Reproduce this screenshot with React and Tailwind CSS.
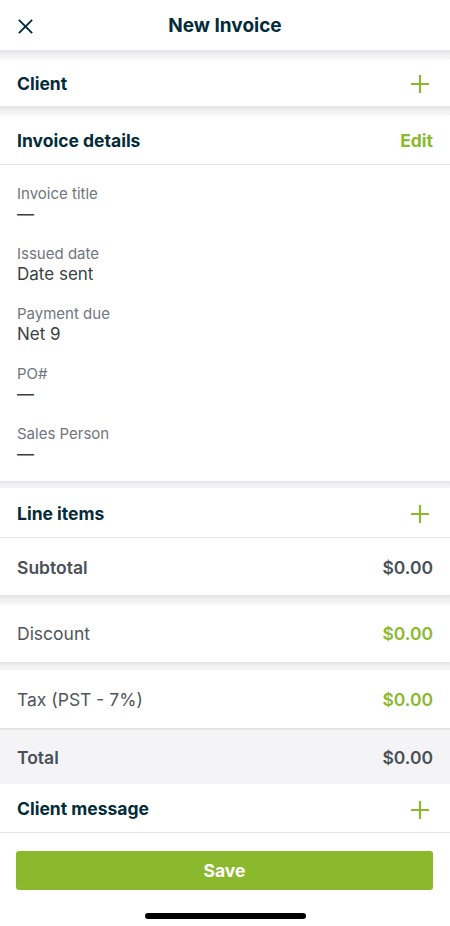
import React from "react";

const Plus = () => (
  <svg width="20" height="20" viewBox="0 0 20 20" className="text-[#8ab92d]">
    <path d="M10 1v18M1 10h18" stroke="currentColor" strokeWidth="2.2" strokeLinecap="butt" fill="none" />
  </svg>
);

const Band = ({ h = "h-[9px]" }) => (
  <div className={`${h} bg-linear-to-b from-[#e3e3e6] via-[#f1f1f3] to-[#f5f5f7]`} />
);

const Field = ({ label, value }) => (
  <div className="flex flex-col">
    <div className="text-[15px] leading-[20px] text-[#70767d]">{label}</div>
    <div className="text-[17px] leading-[20px] text-[#3a3f45]">{value}</div>
  </div>
);

export default function App() {
  return (
    <div className="w-[450px] h-[926px] bg-white flex flex-col font-['Inter',sans-serif] relative overflow-hidden">
      <div className="h-[50px] flex items-center relative pl-[17px] pt-[2px] shrink-0">
        <svg width="17" height="17" viewBox="0 0 18 18" className="text-[#032b3a]">
          <path d="M2 2l14 14M16 2L2 16" stroke="currentColor" strokeWidth="2" fill="none" />
        </svg>
        <div className="absolute inset-x-0 top-0 bottom-0 pt-[3px] flex items-center justify-center text-[19px] font-bold text-[#032b3a] pointer-events-none">New Invoice</div>
      </div>
      <Band />
      <div className="h-[47px] flex items-center justify-between pl-[17px] pr-[20px] pt-[3px]">
        <span className="text-[17.5px] font-bold text-[#032b3a]">Client</span>
        <Plus />
      </div>
      <Band />
      <div className="h-[50px] flex items-center justify-between pl-[17px] pr-[17px] pt-[3px] border-b border-[#e6e6e8]">
        <span className="text-[17.5px] font-bold text-[#032b3a]">Invoice details</span>
        <span className="text-[17.5px] font-bold text-[#8ab92d]">Edit</span>
      </div>
      <div className="flex flex-col gap-[20px] pl-[17px] pr-4 pt-[19px] pb-[17px]">
        <Field label="Invoice title" value="—" />
        <Field label="Issued date" value="Date sent" />
        <Field label="Payment due" value="Net 9" />
        <Field label="PO#" value="—" />
        <Field label="Sales Person" value="—" />
      </div>
      <Band h="h-[7px]" />
      <div className="h-[50px] flex items-center justify-between pl-[17px] pr-[20px] pt-[3px] border-b border-[#e6e6e8]">
        <span className="text-[17.5px] font-bold text-[#032b3a]">Line items</span>
        <Plus />
      </div>
      <div className="h-[57px] flex items-center justify-between pl-[17px] pr-[17px] pt-[3px]">
        <span className="text-[17.5px] font-semibold text-[#4a5058]">Subtotal</span>
        <span className="text-[17.5px] font-semibold text-[#4a5058]">$0.00</span>
      </div>
      <Band />
      <div className="h-[58px] flex items-center justify-between pl-[17px] pr-[17px] pt-[3px]">
        <span className="text-[17.5px] text-[#4f555c]">Discount</span>
        <span className="text-[17.5px] font-semibold text-[#8ab92d]">$0.00</span>
      </div>
      <Band h="h-[8px]" />
      <div className="h-[58px] flex items-center justify-between pl-[17px] pr-[17px] pt-[3px]">
        <span className="text-[17.5px] text-[#4f555c]">Tax (PST - 7%)</span>
        <span className="text-[17.5px] font-semibold text-[#8ab92d]">$0.00</span>
      </div>
      <div className="h-[56px] flex items-center justify-between pl-[17px] pr-[17px] pt-[3px] bg-[#f4f4f6] border-t-2 border-[#e4e4e7]">
        <span className="text-[17.5px] font-semibold text-[#4a5058]">Total</span>
        <span className="text-[17.5px] font-semibold text-[#4a5058]">$0.00</span>
      </div>
      <div className="h-[49px] flex items-center justify-between pl-[17px] pr-[20px] pt-[3px] border-b border-[#e6e6e8]">
        <span className="text-[17.5px] font-bold text-[#032b3a]">Client message</span>
        <Plus />
      </div>
      <div className="pl-[16px] pr-[17px] pt-[18px]">
        <button className="w-full h-[39px] rounded-[3px] bg-[#8bb92e] text-white text-[17.5px] font-bold pt-[2px]">Save</button>
      </div>
      <div className="flex justify-center pt-[23px]">
        <div className="w-[161px] h-[6px] rounded-full bg-black" />
      </div>
    </div>
  );
}
